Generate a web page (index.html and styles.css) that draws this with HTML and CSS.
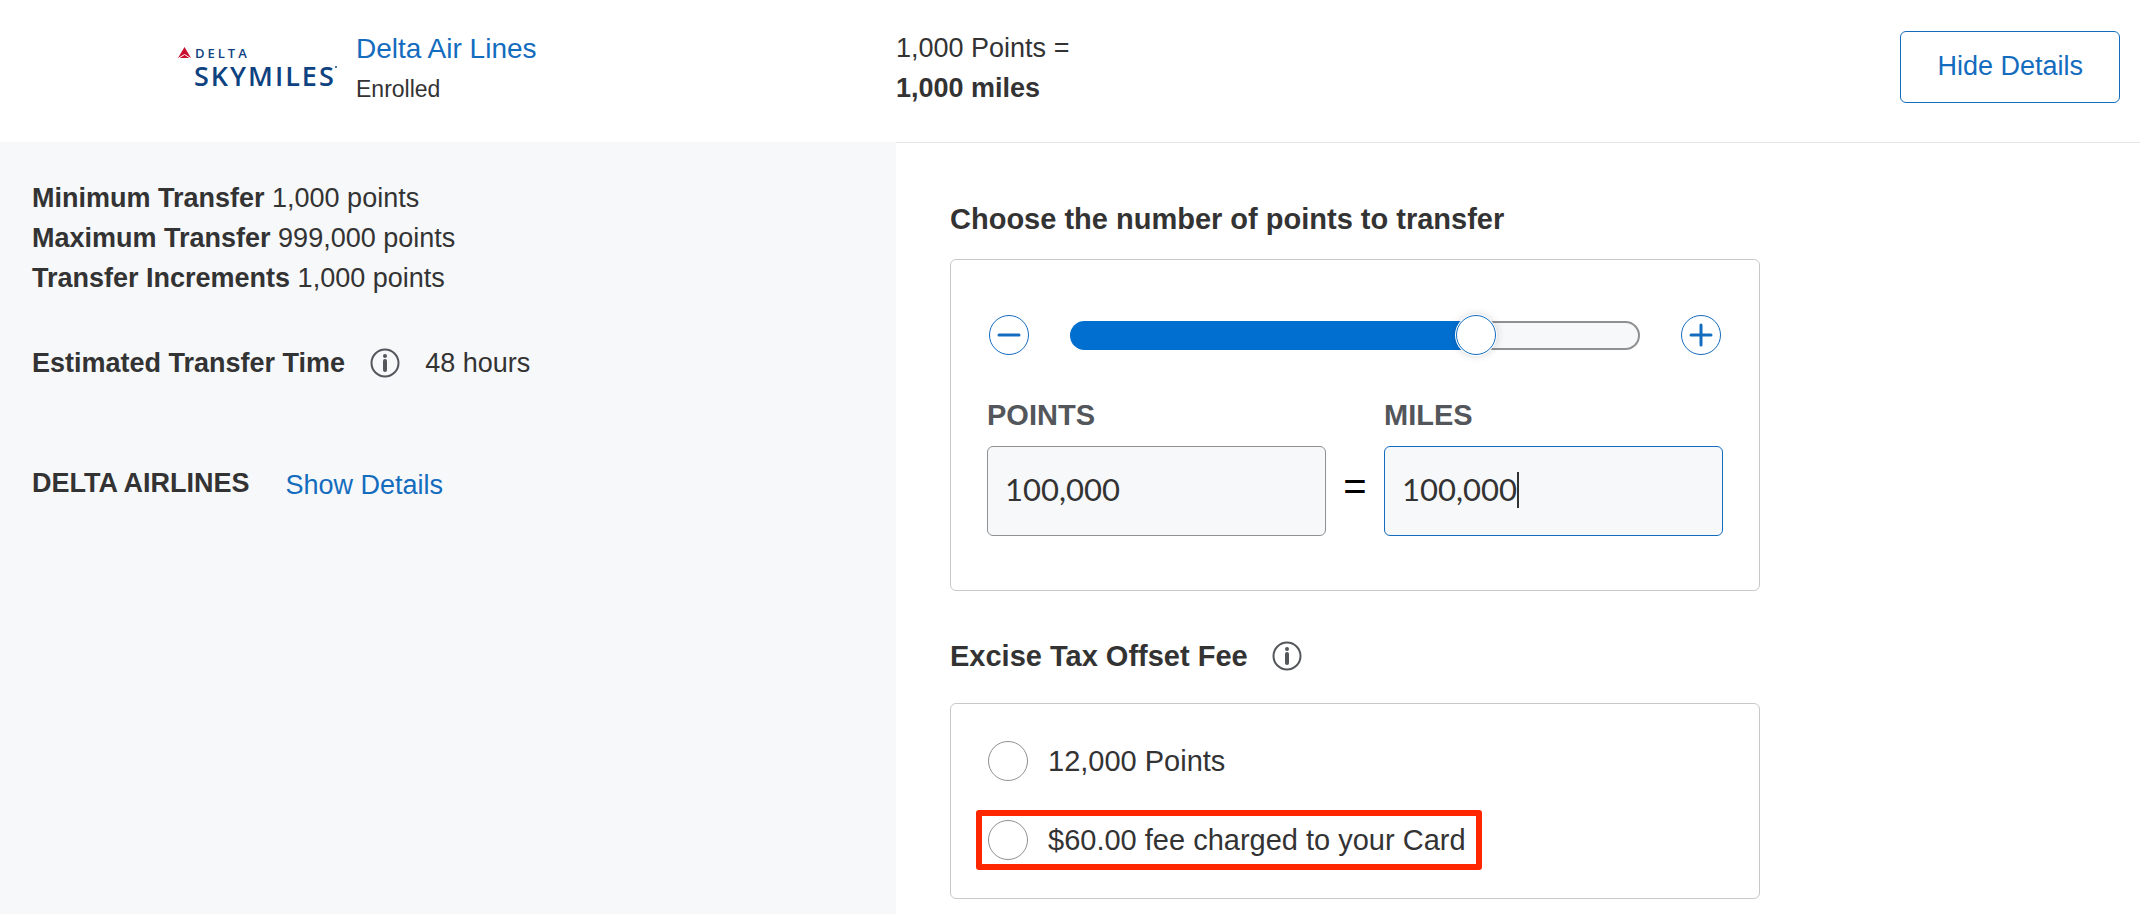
FILE: index.html
```html
<!DOCTYPE html>
<html lang="en">
<head>
<meta charset="utf-8">
<title>Transfer Points</title>
<link rel="stylesheet" href="styles.css">
</head>
<body>
<header class="partner">
  <div class="partner-id">
    <svg class="logo" viewBox="0 0 164 46" role="img" aria-label="Delta SkyMiles">
      <path d="M6.500 -1 L13 10 H0 Z" fill="#c8102e"/>
      <path d="M0 10.500 L6.500 6.500 L13 10.500" fill="none" stroke="#fff" stroke-width="1"/>
      <text class="logo-delta" x="17" y="10">DELTA</text>
      <text class="logo-sky" x="16" y="38">SKYMILES</text>
      <circle cx="158" cy="19" r="1" fill="#0f4280"/>
    </svg>
    <div>
      <a class="partner-name" href="#">Delta Air Lines</a>
      <div class="status">Enrolled</div>
    </div>
  </div>
  <div class="rate">
    <div>1,000 Points =</div>
    <strong>1,000 miles</strong>
  </div>
  <button class="toggle" type="button">Hide Details</button>
</header>
<div class="details">
  <aside class="summary">
    <div><strong>Minimum Transfer</strong> 1,000 points</div>
    <div><strong>Maximum Transfer</strong> 999,000 points</div>
    <div><strong>Transfer Increments</strong> 1,000 points</div>
    <div class="time">
      <strong>Estimated Transfer Time</strong>
      <svg class="info" viewBox="0 0 30 30" aria-hidden="true"><circle cx="15" cy="15" r="13.500"/><path d="M15 13V22"/><circle class="dot" cx="15" cy="8" r="2"/></svg>
      <span>48 hours</span>
    </div>
    <div class="airline"><strong>DELTA AIRLINES</strong><a href="#">Show Details</a></div>
  </aside>
  <main class="transfer">
    <h2>Choose the number of points to transfer</h2>
    <section class="card amount">
      <div class="slider-row">
        <button class="step" type="button" aria-label="Decrease points"><svg viewBox="0 0 38 38"><path d="M9 19H29"/></svg></button>
        <input class="slider" type="range" min="0" max="137000" step="1000" value="100000" aria-label="Points to transfer">
        <button class="step" type="button" aria-label="Increase points"><svg viewBox="0 0 38 38"><path d="M9 19H29M19 9V29"/></svg></button>
      </div>
      <div class="fields">
        <div class="field">
          <label for="points">POINTS</label>
          <input id="points" type="text" value="100,000">
        </div>
        <div class="equals">=</div>
        <div class="field active">
          <label for="miles">MILES</label>
          <input id="miles" type="text" value="100,000">
          <span class="caret"></span>
        </div>
      </div>
    </section>
    <h2>Excise Tax Offset Fee
      <svg class="info" viewBox="0 0 30 30" aria-hidden="true"><circle cx="15" cy="15" r="13.500"/><path d="M15 13V22"/><circle class="dot" cx="15" cy="8" r="2"/></svg>
    </h2>
    <section class="card fee">
      <label class="option"><input type="radio" name="fee">12,000 Points</label>
      <label class="option marked"><input type="radio" name="fee">$60.00 fee charged to your Card</label>
    </section>
  </main>
</div>
</body>
</html>
```
FILE: styles.css
```css
* { box-sizing: border-box; }

body {
  margin: 0;
  min-height: 100vh;
  display: flex;
  flex-direction: column;
  background: #fff;
  color: #333;
  font: 27px/40px "Liberation Sans", Arial, sans-serif;
}

a { color: #146cbe; text-decoration: none; }

.partner {
  display: grid;
  grid-template-columns: 41.87vw 1fr auto;
  align-items: start;
  padding: 28px 20px 34px 0;
}

.partner-id {
  display: flex;
  gap: 14px;
  padding-left: 178px;
}

.logo { width: 164px; height: 46px; margin-top: 20px; overflow: visible; }
.logo text { fill: #0f4280; font-family: "Open Sans", sans-serif; }
.logo .logo-delta { font-size: 13px; font-weight: 600; letter-spacing: 3px; }
.logo .logo-sky { font-size: 27px; font-weight: 600; letter-spacing: 2px; }

.partner-name { display: block; font-size: 28px; line-height: 42px; }
.status { font-size: 23px; line-height: 38px; }

.toggle {
  margin-top: 3px;
  padding: 14px 36px 16px;
  border: 1px solid #146cbe;
  border-radius: 6px;
  background: #fff;
  color: #146cbe;
  font: inherit;
}

.details {
  flex: 1;
  display: grid;
  grid-template-columns: 41.87vw 1fr;
}

.summary { padding: 36px 32px; background: #f7f8fa; }

.info { width: 30px; height: 30px; flex: none; fill: none; stroke: #53565a; stroke-width: 2; }
.info path { stroke-width: 4; stroke-linecap: round; }
.info .dot { fill: #53565a; stroke: none; }

.time { display: flex; align-items: center; gap: 25px; margin-top: 45px; }
.airline { display: flex; gap: 36px; margin-top: 80px; }
.airline a { padding-top: 2px; }

.transfer { padding: 0 54px 16px; border-top: 1px solid #e6e7e8; }

h2 {
  display: flex;
  align-items: center;
  gap: 24px;
  margin: 56px 0 20px;
  font-size: 29px;
  line-height: 40px;
}

.card {
  width: 100%;
  max-width: 810px;
  border: 1px solid #c8c9c7;
  border-radius: 6px;
}

.amount { padding: 55px 36px 54px; }
.amount + h2 { margin: 45px 0 27px; }

.slider-row { display: flex; align-items: center; gap: 41px; padding: 0 2px; }

.step {
  flex: none;
  width: 40px;
  height: 40px;
  padding: 0;
  border: 1px solid #146cbe;
  border-radius: 50%;
  background: #fff;
}
.step svg { display: block; stroke: #146cbe; stroke-width: 3; stroke-linecap: round; }

.slider {
  flex: 1;
  min-width: 0;
  height: 29px;
  margin: 0;
  appearance: none;
  border: 2px solid transparent;
  border-radius: 15px;
  background:
    linear-gradient(#006fcf, #006fcf) 0 0 / 71% 100% no-repeat border-box,
    linear-gradient(#f7f8fa, #f7f8fa) padding-box,
    linear-gradient(#8e9092, #8e9092) border-box;
}
.slider::-webkit-slider-thumb {
  appearance: none;
  width: 40px;
  height: 40px;
  border: 1px solid #146cbe;
  border-radius: 50%;
  background: #fff;
  box-shadow: 0 0 0 1px #fff, 0 0 10px rgba(0, 0, 0, .2);
}

.fields {
  display: grid;
  grid-template-columns: 1fr 58px 1fr;
  align-items: end;
  margin-top: 40px;
}

.field { position: relative; }
.field label {
  display: block;
  margin-bottom: 11px;
  color: #53565a;
  font-size: 29px;
  font-weight: bold;
}
.field input {
  display: block;
  width: 100%;
  height: 90px;
  padding: 0 17px 4px;
  border: 1px solid #8e9092;
  border-radius: 6px;
  background: #f7f8fa;
  color: #333;
  font: 31px/40px Lato, sans-serif;
}
.field.active input { border-color: #146cbe; }
.caret { position: absolute; left: 133px; bottom: 28px; width: 2px; height: 36px; background: #333; }

.equals { color: #000; font-size: 40px; line-height: 100px; text-align: center; }

.fee {
  display: flex;
  flex-direction: column;
  align-items: flex-start;
  gap: 29px;
  padding: 28px 25px;
}

.option {
  display: flex;
  align-items: center;
  gap: 20px;
  padding: 9px 12px 0;
  font-size: 29px;
}
.option input {
  appearance: none;
  width: 40px;
  height: 40px;
  margin: 0;
  border: 1px solid #8e9092;
  border-radius: 50%;
  background: #fff;
}
.marked { padding: 4px 10px 4px 6px; border: 6px solid #ff2600; border-radius: 3px; }
```
